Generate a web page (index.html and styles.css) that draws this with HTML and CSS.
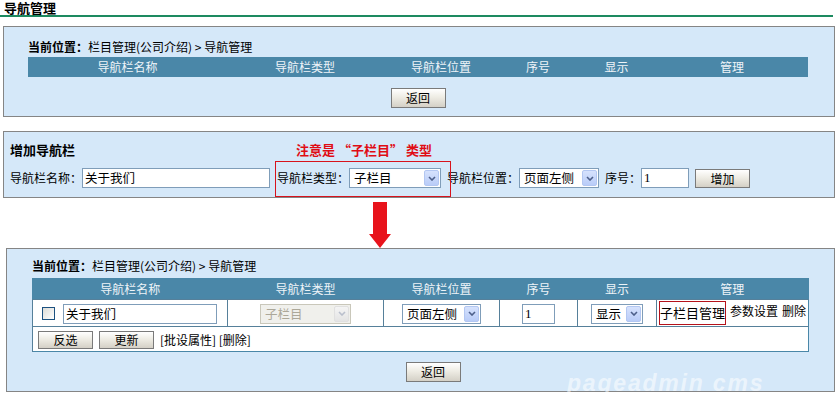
FILE: index.html
```html
<!DOCTYPE html>
<html lang="zh-CN">
<head>
    <meta charset="UTF-8">
    <title>导航管理</title>
    <link rel="stylesheet" href="styles.css">
</head>
<body>
    <div class="page-title">导航管理</div>

    <!-- current list, before adding -->
    <div class="panel panel-list">
        <div class="inner inner-wide">
            <div class="crumb"><b>当前位置：</b>栏目管理(公司介绍) &gt; 导航管理</div>
            <table class="grid grid-wide">
                <colgroup>
                    <col style="width:199px"><col style="width:156px"><col style="width:116px">
                    <col style="width:78px"><col style="width:79px"><col style="width:152px">
                </colgroup>
                <tr class="head">
                    <th>导航栏名称</th><th>导航栏类型</th><th>导航栏位置</th><th>序号</th><th>显示</th><th>管理</th>
                </tr>
            </table>
            <div class="actions"><span class="btn">返回</span></div>
        </div>
    </div>

    <!-- add form -->
    <div class="panel panel-add">
        <div class="add-head">
            <span class="add-title">增加导航栏</span>
            <span class="note">注意是 “子栏目” 类型</span>
        </div>
        <div class="add-row">
            <span class="label">导航栏名称：</span>
            <span class="input input-name">关于我们</span>
            <span class="mark">
                <span class="label">导航栏类型：</span>
                <span class="select sel-type"><span class="select-text">子栏目</span><span class="select-btn"><svg width="8" height="5" viewBox="0 0 8 5"><path d="M1 1 L4 4 L7 1" fill="none" stroke="#4d5f8a" stroke-width="1.6"/></svg></span></span>
            </span>
            <span class="label gap">导航栏位置：</span>
            <span class="select sel-pos"><span class="select-text">页面左侧</span><span class="select-btn"><svg width="8" height="5" viewBox="0 0 8 5"><path d="M1 1 L4 4 L7 1" fill="none" stroke="#4d5f8a" stroke-width="1.6"/></svg></span></span>
            <span class="label gap">序号：</span>
            <span class="input input-num">1</span>
            <span class="btn btn-add">增加</span>
        </div>
    </div>

    <div class="arrow">
        <svg width="22" height="46" viewBox="0 0 22 46">
            <rect x="4" y="0" width="14" height="32" fill="#e8131b"/>
            <polygon points="0,32 22,32 11,46" fill="#e8131b"/>
        </svg>
    </div>

    <!-- list after adding -->
    <div class="panel panel-result">
        <div class="inner">
            <div class="crumb crumb-2"><b>当前位置：</b>栏目管理(公司介绍) &gt; 导航管理</div>
            <table class="grid">
                <colgroup>
                    <col style="width:195px"><col style="width:156px"><col style="width:116px">
                    <col style="width:78px"><col style="width:79px"><col style="width:152px">
                </colgroup>
                <tr class="head">
                    <th>导航栏名称</th><th>导航栏类型</th><th>导航栏位置</th><th>序号</th><th>显示</th><th>管理</th>
                </tr>
                <tr class="item">
                    <td class="left"><span class="check"></span><span class="input input-row">关于我们</span></td>
                    <td><span class="select select-off sel-row-type"><span class="select-text">子栏目</span><span class="select-btn"><svg width="8" height="5" viewBox="0 0 8 5"><path d="M1 1 L4 4 L7 1" fill="none" stroke="#b9bfcc" stroke-width="1.6"/></svg></span></span></td>
                    <td><span class="select sel-row-pos"><span class="select-text">页面左侧</span><span class="select-btn"><svg width="8" height="5" viewBox="0 0 8 5"><path d="M1 1 L4 4 L7 1" fill="none" stroke="#4d5f8a" stroke-width="1.6"/></svg></span></span></td>
                    <td><span class="input input-order">1</span></td>
                    <td><span class="select sel-row-show"><span class="select-text">显示</span><span class="select-btn"><svg width="8" height="5" viewBox="0 0 8 5"><path d="M1 1 L4 4 L7 1" fill="none" stroke="#4d5f8a" stroke-width="1.6"/></svg></span></span></td>
                    <td class="manage"><span class="sub-link">子栏目管理</span><span>参数设置</span><span>删除</span></td>
                </tr>
                <tr class="tools">
                    <td colspan="6"><span class="btn btn-small">反选</span><span class="btn btn-small">更新</span><span class="batch">[批设属性] [删除]</span></td>
                </tr>
            </table>
            <div class="actions actions-2"><span class="btn">返回</span></div>
        </div>
        <div class="watermark">pageadmin cms</div>
    </div>
</body>
</html>
```

FILE: styles.css
```css
body {
    margin: 0;
    font-family: "Noto Sans CJK SC", "Liberation Sans", sans-serif;
    font-size: 12px;
    line-height: 20px;
    color: #000;
    background-color: #fff;
}
.page-title {
    width: 833px;
    height: 17px;
    box-sizing: border-box;
    padding-left: 4px;
    font-size: 13px;
    font-weight: bold;
    line-height: 15px;
    border-bottom: 2px solid #1d8a60;
}
.panel {
    box-sizing: border-box;
    border: 1px solid #858585;
    background-color: #d5e8f9;
}
.panel-list {
    margin: 9px 0 0 3px;
    width: 832px;
    padding: 0 0 8px 24px;
}
.inner-wide {
    width: 780px;
}
.crumb {
    margin-top: 10px;
    height: 20px;
}
.grid {
    border-collapse: collapse;
    table-layout: fixed;
    width: 776px;
    background-color: #fff;
    border: 1px solid #4a87a8;
}
.grid-wide {
    width: 780px;
    border: none;
}
.grid th {
    height: 20px;
    padding: 0;
    font-weight: normal;
    color: #eef4f8;
    background-color: #4a87a8;
    text-align: center;
}
.grid td {
    padding: 0;
    text-align: center;
    vertical-align: middle;
    border-left: 1px solid #56809a;
    border-top: 1px solid #56809a;
}
.grid td.left {
    text-align: left;
}
.item td {
    height: 26px;
    line-height: 20px;
}
.grid .tools td {
    height: 24px;
    text-align: left;
    padding-left: 5px;
}
.actions {
    margin-top: 11px;
    display: flex;
    justify-content: center;
    height: 20px;
}
.btn {
    display: inline-block;
    box-sizing: border-box;
    width: 55px;
    height: 20px;
    line-height: 18px;
    text-align: center;
    border: 1px solid #7a7a7a;
    background: linear-gradient(to bottom, #ffffff, #eeece4 45%, #d4d0c6);
    vertical-align: middle;
}
.btn-small {
    height: 18px;
    line-height: 16px;
    margin-right: 6px;
}

/* add form */
.panel-add {
    margin: 14px 0 0 3px;
    width: 832px;
    padding: 0 0 9px 6px;
}
.add-head {
    margin-top: 8px;
    display: flex;
    height: 20px;
}
.add-title {
    width: 286px;
    font-size: 13px;
    font-weight: bold;
}
.note {
    color: #e00c14;
    font-size: 13px;
    font-weight: bold;
}
.add-row {
    margin-top: 8px;
    display: flex;
    align-items: center;
    height: 20px;
}
.label {
    white-space: nowrap;
}
.gap {
    margin-left: 6px;
}
.input {
    display: inline-block;
    box-sizing: border-box;
    height: 20px;
    line-height: 18px;
    padding-left: 2px;
    border: 1px solid #7f9db9;
    background-color: #fff;
    font-size: 12.5px;
    text-align: left;
    vertical-align: middle;
}
.input-name {
    width: 188px;
}
.input-num {
    width: 48px;
    font-family: "Liberation Serif", serif;
    font-size: 13px;
}
.btn-add {
    margin-left: 6px;
    height: 19px;
    line-height: 17px;
}
.mark {
    position: relative;
    display: flex;
    align-items: center;
    margin-left: 7px;
}
.mark::after {
    content: "";
    position: absolute;
    top: -7px;
    bottom: -9px;
    left: -2px;
    right: -10px;
    border: 1px solid #d8131c;
    pointer-events: none;
}
.select {
    display: inline-flex;
    align-items: center;
    justify-content: space-between;
    box-sizing: border-box;
    height: 20px;
    padding-right: 1px;
    border: 1px solid #7f9db9;
    background-color: #fff;
    font-size: 12.5px;
    vertical-align: middle;
}
.select-text {
    padding-left: 4px;
    white-space: nowrap;
}
.select-btn {
    display: flex;
    align-items: center;
    justify-content: center;
    box-sizing: border-box;
    width: 15px;
    height: 16px;
    border: 1px solid #b3c7f2;
    border-radius: 2px;
    background: linear-gradient(to bottom, #d6e2fd, #b9ccf8);
}
.sel-type {
    width: 92px;
}
.sel-pos {
    width: 80px;
}

/* arrow between the panels */
.arrow {
    height: 46px;
    margin-top: 4px;
    padding-left: 369px;
}
.arrow svg {
    display: block;
}

/* list after adding */
.panel-result {
    position: relative;
    margin-left: 6px;
    width: 829px;
    padding: 0 0 9px 25px;
}
.crumb-2 {
    margin-top: 7px;
    margin-bottom: 2px;
}
.check {
    display: inline-block;
    box-sizing: border-box;
    width: 13px;
    height: 13px;
    margin: 0 8px 0 9px;
    border: 1px solid #1c5180;
    background: linear-gradient(135deg, #dcdcd7, #ffffff);
    vertical-align: middle;
}
.input-row {
    width: 154px;
}
.input-order {
    width: 33px;
    font-family: "Liberation Serif", serif;
    font-size: 13px;
}
.sel-row-type {
    width: 91px;
}
.sel-row-pos {
    width: 79px;
}
.sel-row-show {
    width: 52px;
}
.select-off {
    border-color: #c9c7ba;
    background-color: #f0f0ec;
    color: #aca899;
}
.select-off .select-btn {
    border-color: #e0e0e0;
    background: linear-gradient(to bottom, #f4f4f4, #e4e4e4);
}
.manage span {
    margin-left: 4px;
}
.manage .sub-link {
    display: inline-block;
    margin-left: 0;
    height: 22px;
    line-height: 22px;
    font-size: 13px;
    border: 1px solid #b5121b;
    vertical-align: middle;
}
.batch {
    vertical-align: middle;
}
.actions-2 {
    margin-top: 10px;
}
.watermark {
    position: absolute;
    left: 560px;
    top: 122px;
    font-family: "Liberation Sans", sans-serif;
    font-size: 23px;
    font-weight: bold;
    font-style: italic;
    letter-spacing: 1.8px;
    line-height: 24px;
    color: rgba(255, 255, 255, 0.55);
}
```
